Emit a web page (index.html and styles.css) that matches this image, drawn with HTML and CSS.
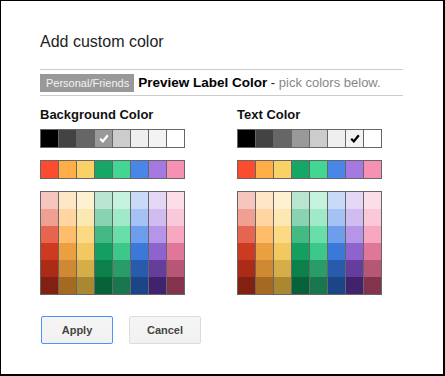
FILE: index.html
```html
<!DOCTYPE html>
<html lang="en">
<head>
    <meta charset="UTF-8">
    <title>Add custom color</title>
    <link rel="stylesheet" href="styles.css">
</head>
<body>
    <div class="dialog">
        <h1 class="title">Add custom color</h1>
        <div class="preview">
            <span class="label-chip">Personal/Friends</span>
            <span class="preview-name">Preview Label Color</span>
            <span class="preview-dash">&nbsp;-&nbsp;</span>
            <span class="preview-hint">pick colors below.</span>
        </div>
        <div class="pickers">
            <div class="picker" id="bg-picker">
                <h2>Background Color</h2>
            </div>
            <div class="picker" id="text-picker">
                <h2>Text Color</h2>
            </div>
        </div>
        <div class="buttons">
            <button class="btn btn-focus">Apply</button>
            <button class="btn">Cancel</button>
        </div>
    </div>

    <script>
        const grays = ['#000000', '#434343', '#666666', '#999999', '#cccccc', '#efefef', '#f3f3f3', '#ffffff'];
        const brights = ['#fb4c2f', '#ffad47', '#fad165', '#16a766', '#43d692', '#4a86e8', '#a479e2', '#f691b3'];
        const shades = [
            ['#f6c5be', '#ffe6c7', '#fef1d1', '#b9e4d0', '#c6f3de', '#c9daf8', '#e4d7f5', '#fcdee8'],
            ['#efa093', '#ffd6a2', '#fce8b3', '#89d3b2', '#a0eac9', '#a4c2f4', '#d0bcf1', '#fbc8d9'],
            ['#e66550', '#ffbc6b', '#fcda83', '#44b984', '#68dfa9', '#6d9eeb', '#b694e8', '#f7a7c0'],
            ['#cc3a21', '#eaa041', '#f2c960', '#149e60', '#3dc789', '#3c78d8', '#8e63ce', '#e07798'],
            ['#ac2b16', '#cf8933', '#d5ae49', '#0b804b', '#2a9c68', '#285bac', '#653e9b', '#b65775'],
            ['#822111', '#a46a21', '#aa8831', '#076239', '#1a764d', '#1c4587', '#41236d', '#83334c']
        ];

        function checkMark(color) {
            return '<svg width="10" height="9" viewBox="0 0 10 9"><path d="M1.2 4.8 L3.8 7.4 L8.8 1.2" fill="none" stroke="' + color + '" stroke-width="2.2"/></svg>';
        }

        function makeRow(colors, cls, selected, checkColor) {
            const row = document.createElement('div');
            row.className = cls;
            colors.forEach((c, i) => {
                const cell = document.createElement('div');
                cell.className = 'swatch';
                cell.style.background = c;
                if (i === selected) cell.innerHTML = checkMark(checkColor);
                row.appendChild(cell);
            });
            return row;
        }

        function buildPicker(el, selected, checkColor) {
            el.appendChild(makeRow(grays, 'swatch-row', selected, checkColor));
            el.appendChild(makeRow(brights, 'swatch-row', -1));
            el.appendChild(makeRow(shades.flat(), 'swatch-grid', -1));
        }

        buildPicker(document.getElementById('bg-picker'), 3, '#fff');
        buildPicker(document.getElementById('text-picker'), 6, '#000');
    </script>
</body>
</html>
```

FILE: styles.css
```css
body {
    margin: 0;
    font-family: Arial, "Liberation Sans", sans-serif;
    background: #fff;
}

.dialog {
    box-sizing: border-box;
    width: 445px;
    height: 376px;
    border: 1px solid #000;
    border-right-width: 2px;
    border-bottom-width: 2px;
    padding: 31px 40px 0 39px;
    color: #222;
}

.title {
    margin: 0 0 17px;
    font-size: 16px;
    font-weight: normal;
    line-height: 20px;
}

.preview {
    display: flex;
    align-items: center;
    border-top: 1px solid #ccc;
    border-bottom: 1px solid #ccc;
    padding: 3px 0;
    font-size: 13px;
    line-height: 19px;
}

.label-chip {
    height: 18px;
    padding: 0 5px 0 6px;
    margin-right: 4px;
    background: #999;
    color: #f3f3f3;
    font-size: 11px;
    line-height: 18px;
}

.preview-name {
    font-weight: bold;
    font-size: 13.5px;
    color: #000;
}

.preview-dash {
    color: #222;
}

.preview-hint {
    color: #888;
}

.pickers {
    display: grid;
    grid-template-columns: 145px 145px;
    column-gap: 52px;
    margin-top: 11px;
}

.picker h2 {
    margin: 0 0 6px;
    font-size: 13px;
    line-height: 16px;
    color: #111;
}

.swatch-row,
.swatch-grid {
    display: grid;
    grid-template-columns: repeat(8, 17px);
    grid-auto-rows: 17px;
    column-gap: 1px;
    width: 145px;
    box-sizing: border-box;
    padding: 1px;
    background: #666;
    margin-bottom: 12px;
}

.swatch-row {
    row-gap: 1px;
}

.swatch {
    display: flex;
    align-items: center;
    justify-content: center;
}

.buttons {
    display: flex;
    gap: 16px;
    margin-top: 9px;
    padding-left: 1px;
}

.btn {
    box-sizing: border-box;
    min-width: 72px;
    height: 28px;
    padding: 0 8px;
    border: 1px solid #dcdcdc;
    border-radius: 2px;
    background: linear-gradient(#f5f5f5, #f1f1f1);
    color: #444;
    font-family: Arial, "Liberation Sans", sans-serif;
    font-size: 11px;
    font-weight: bold;
}

.btn-focus {
    border-color: #4d90fe;
}
```
